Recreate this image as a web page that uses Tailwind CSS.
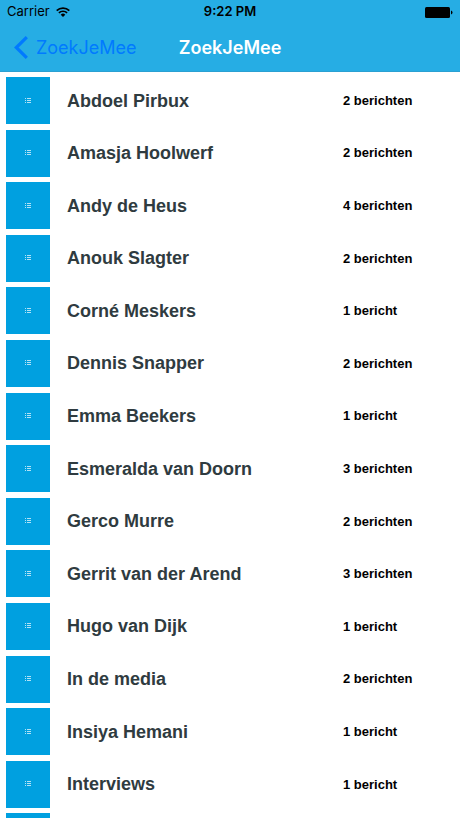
<!DOCTYPE html>
<html lang="nl">
<head>
  <meta charset="UTF-8">
  <meta name="viewport" content="width=device-width, initial-scale=1.0">
  <title>ZoekJeMee</title>
  <script src="https://cdn.jsdelivr.net/npm/@tailwindcss/browser@4"></script>
</head>
<body class="bg-white h-screen flex flex-col overflow-hidden font-['Liberation_Sans',Arial,sans-serif]">

  <!-- Shared list icon -->
  <svg class="hidden" xmlns="http://www.w3.org/2000/svg">
    <symbol id="icon-list" viewBox="0 0 6 6">
      <path d="M0 .5h1M2 .5h4M0 2.5h1M2 2.5h4M0 4.5h1M2 4.5h4" stroke="currentColor" stroke-width="0.7" fill="none" />
    </symbol>
  </svg>

  <!-- Header -->
  <header class="bg-[#26ade4] border-b border-[#2ba0d2] shrink-0 font-[Inter,sans-serif]">
    <!-- Status bar -->
    <div class="h-6 px-[7px] grid grid-cols-3 items-center text-[13px] text-black">
      <div class="flex items-center gap-[6px]">
        <span>Carrier</span>
        <svg class="w-[14px] h-[10px]" viewBox="0 0 14 10" fill="none" stroke="currentColor" stroke-width="1.7">
          <path d="M.7 3.6a9 9 0 0 1 12.6 0M2.9 5.9a5.9 5.9 0 0 1 8.2 0" />
          <path d="M7 10L4.7 7.7a3.3 3.3 0 0 1 4.6 0z" fill="currentColor" stroke="none" />
        </svg>
      </div>
      <span class="text-center font-semibold">9:22 PM</span>
      <svg class="w-7 h-[11px] justify-self-end" viewBox="0 0 28 11" fill="currentColor">
        <rect x="0" y="0" width="25" height="11" rx="1.5" />
        <path d="M26 3.5q1.5.5 1.5 2t-1.5 2z" />
      </svg>
    </div>
    <!-- Navigation bar -->
    <nav class="h-[47px] px-[14px] grid grid-cols-[1fr_auto_1fr] items-center text-lg">
      <a href="#" class="flex items-center gap-2 text-[#007aff]">
        <svg class="w-[14px] h-[23px]" viewBox="0 0 14 23" fill="none" stroke="currentColor" stroke-width="3.2">
          <path d="M12.8 1.2L2.3 11.5l10.5 10.3" />
        </svg>
        ZoekJeMee
      </a>
      <h1 class="font-semibold text-white">ZoekJeMee</h1>
    </nav>
  </header>

  <!-- Contact list -->
  <main class="flex-1 overflow-hidden">
    <ul class="grid auto-rows-fr min-h-[789px] mt-[5px] pl-[6px]">
      <li>
        <a href="#" class="flex items-center h-[47px]">
          <span class="w-11 h-full bg-[#00a0e0] text-white flex items-center justify-center"><svg class="size-[6px]"><use href="#icon-list" /></svg></span>
          <span class="flex-1 pl-[17px] text-lg font-bold text-[#2f3b40]">Abdoel Pirbux</span>
          <span class="w-[117px] text-[13px] font-bold text-black">2 berichten</span>
        </a>
      </li>
      <li>
        <a href="#" class="flex items-center h-[47px]">
          <span class="w-11 h-full bg-[#00a0e0] text-white flex items-center justify-center"><svg class="size-[6px]"><use href="#icon-list" /></svg></span>
          <span class="flex-1 pl-[17px] text-lg font-bold text-[#2f3b40]">Amasja Hoolwerf</span>
          <span class="w-[117px] text-[13px] font-bold text-black">2 berichten</span>
        </a>
      </li>
      <li>
        <a href="#" class="flex items-center h-[47px]">
          <span class="w-11 h-full bg-[#00a0e0] text-white flex items-center justify-center"><svg class="size-[6px]"><use href="#icon-list" /></svg></span>
          <span class="flex-1 pl-[17px] text-lg font-bold text-[#2f3b40]">Andy de Heus</span>
          <span class="w-[117px] text-[13px] font-bold text-black">4 berichten</span>
        </a>
      </li>
      <li>
        <a href="#" class="flex items-center h-[47px]">
          <span class="w-11 h-full bg-[#00a0e0] text-white flex items-center justify-center"><svg class="size-[6px]"><use href="#icon-list" /></svg></span>
          <span class="flex-1 pl-[17px] text-lg font-bold text-[#2f3b40]">Anouk Slagter</span>
          <span class="w-[117px] text-[13px] font-bold text-black">2 berichten</span>
        </a>
      </li>
      <li>
        <a href="#" class="flex items-center h-[47px]">
          <span class="w-11 h-full bg-[#00a0e0] text-white flex items-center justify-center"><svg class="size-[6px]"><use href="#icon-list" /></svg></span>
          <span class="flex-1 pl-[17px] text-lg font-bold text-[#2f3b40]">Corné Meskers</span>
          <span class="w-[117px] text-[13px] font-bold text-black">1 bericht</span>
        </a>
      </li>
      <li>
        <a href="#" class="flex items-center h-[47px]">
          <span class="w-11 h-full bg-[#00a0e0] text-white flex items-center justify-center"><svg class="size-[6px]"><use href="#icon-list" /></svg></span>
          <span class="flex-1 pl-[17px] text-lg font-bold text-[#2f3b40]">Dennis Snapper</span>
          <span class="w-[117px] text-[13px] font-bold text-black">2 berichten</span>
        </a>
      </li>
      <li>
        <a href="#" class="flex items-center h-[47px]">
          <span class="w-11 h-full bg-[#00a0e0] text-white flex items-center justify-center"><svg class="size-[6px]"><use href="#icon-list" /></svg></span>
          <span class="flex-1 pl-[17px] text-lg font-bold text-[#2f3b40]">Emma Beekers</span>
          <span class="w-[117px] text-[13px] font-bold text-black">1 bericht</span>
        </a>
      </li>
      <li>
        <a href="#" class="flex items-center h-[47px]">
          <span class="w-11 h-full bg-[#00a0e0] text-white flex items-center justify-center"><svg class="size-[6px]"><use href="#icon-list" /></svg></span>
          <span class="flex-1 pl-[17px] text-lg font-bold text-[#2f3b40]">Esmeralda van Doorn</span>
          <span class="w-[117px] text-[13px] font-bold text-black">3 berichten</span>
        </a>
      </li>
      <li>
        <a href="#" class="flex items-center h-[47px]">
          <span class="w-11 h-full bg-[#00a0e0] text-white flex items-center justify-center"><svg class="size-[6px]"><use href="#icon-list" /></svg></span>
          <span class="flex-1 pl-[17px] text-lg font-bold text-[#2f3b40]">Gerco Murre</span>
          <span class="w-[117px] text-[13px] font-bold text-black">2 berichten</span>
        </a>
      </li>
      <li>
        <a href="#" class="flex items-center h-[47px]">
          <span class="w-11 h-full bg-[#00a0e0] text-white flex items-center justify-center"><svg class="size-[6px]"><use href="#icon-list" /></svg></span>
          <span class="flex-1 pl-[17px] text-lg font-bold text-[#2f3b40]">Gerrit van der Arend</span>
          <span class="w-[117px] text-[13px] font-bold text-black">3 berichten</span>
        </a>
      </li>
      <li>
        <a href="#" class="flex items-center h-[47px]">
          <span class="w-11 h-full bg-[#00a0e0] text-white flex items-center justify-center"><svg class="size-[6px]"><use href="#icon-list" /></svg></span>
          <span class="flex-1 pl-[17px] text-lg font-bold text-[#2f3b40]">Hugo van Dijk</span>
          <span class="w-[117px] text-[13px] font-bold text-black">1 bericht</span>
        </a>
      </li>
      <li>
        <a href="#" class="flex items-center h-[47px]">
          <span class="w-11 h-full bg-[#00a0e0] text-white flex items-center justify-center"><svg class="size-[6px]"><use href="#icon-list" /></svg></span>
          <span class="flex-1 pl-[17px] text-lg font-bold text-[#2f3b40]">In de media</span>
          <span class="w-[117px] text-[13px] font-bold text-black">2 berichten</span>
        </a>
      </li>
      <li>
        <a href="#" class="flex items-center h-[47px]">
          <span class="w-11 h-full bg-[#00a0e0] text-white flex items-center justify-center"><svg class="size-[6px]"><use href="#icon-list" /></svg></span>
          <span class="flex-1 pl-[17px] text-lg font-bold text-[#2f3b40]">Insiya Hemani</span>
          <span class="w-[117px] text-[13px] font-bold text-black">1 bericht</span>
        </a>
      </li>
      <li>
        <a href="#" class="flex items-center h-[47px]">
          <span class="w-11 h-full bg-[#00a0e0] text-white flex items-center justify-center"><svg class="size-[6px]"><use href="#icon-list" /></svg></span>
          <span class="flex-1 pl-[17px] text-lg font-bold text-[#2f3b40]">Interviews</span>
          <span class="w-[117px] text-[13px] font-bold text-black">1 bericht</span>
        </a>
      </li>
      <!-- Next row, mostly below the fold -->
      <li>
        <div class="w-11 h-[47px] bg-[#00a0e0]"></div>
      </li>
    </ul>
  </main>

</body>
</html>
